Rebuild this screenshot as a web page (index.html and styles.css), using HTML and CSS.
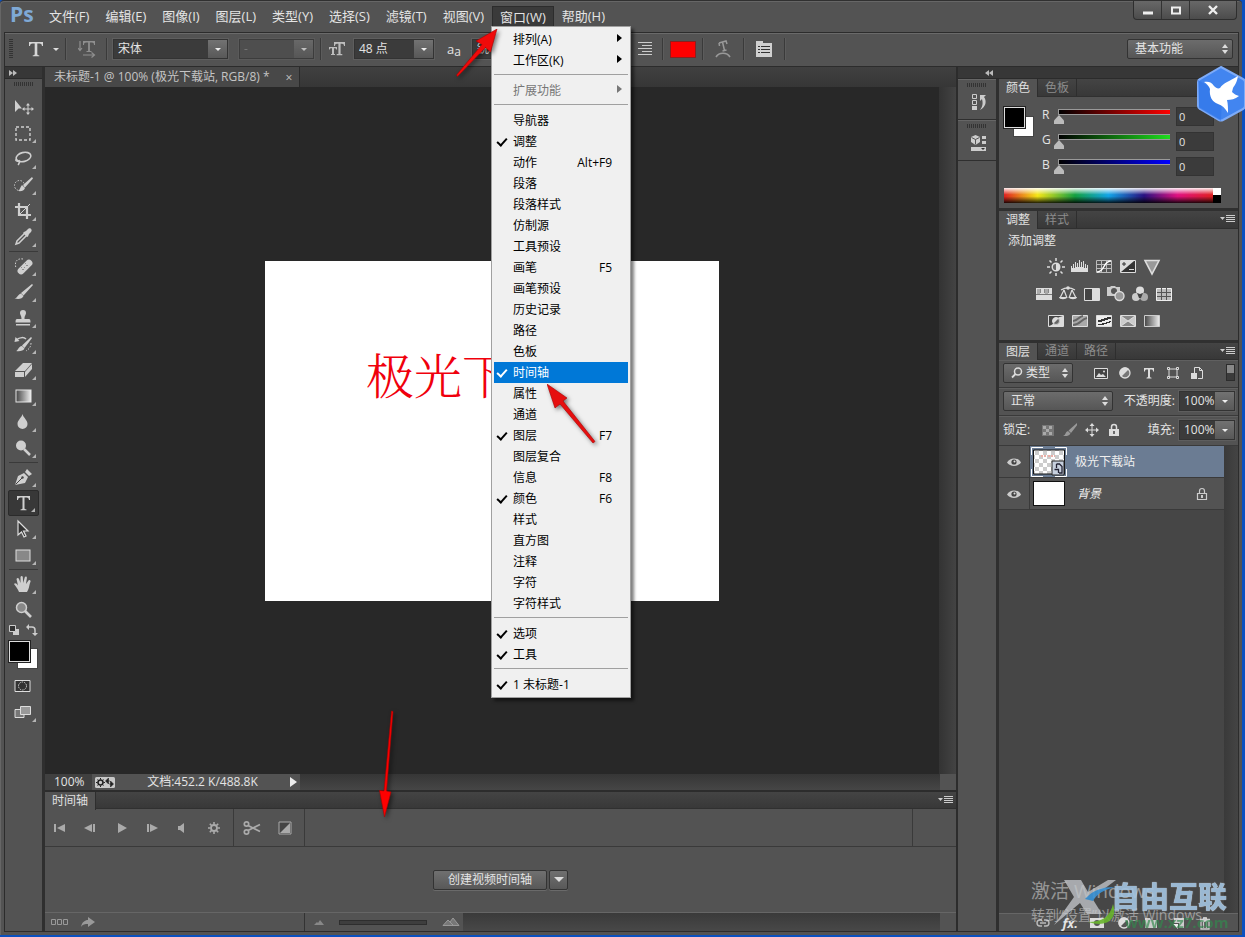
FILE: index.html
```html
<!DOCTYPE html>
<html lang="zh-CN">
<head>
<meta charset="utf-8">
<title>未标题-1</title>
<link rel="stylesheet" href="styles.css">
</head>
<body>
<div class="window">
  <header class="titlebar">
    <svg class="brand" viewBox="0 0 32 26" role="img" aria-label="Ps"><text x="3" y="21" class="brand-text">Ps</text></svg>
    <nav class="menubar">
      <button>文件(F)</button><button>编辑(E)</button><button>图像(I)</button><button>图层(L)</button><button>类型(Y)</button><button>选择(S)</button><button>滤镜(T)</button><button>视图(V)</button>
      <div class="menu-holder">
        <button class="open">窗口(W)</button>
        <ul class="menu">
          <li><button>排列(A)<i class="sub"></i></button></li>
          <li><button>工作区(K)<i class="sub"></i></button></li>
          <li class="line"></li>
          <li><button class="off">扩展功能<i class="sub"></i></button></li>
          <li class="line"></li>
          <li><button>导航器</button></li>
          <li><button class="on">调整</button></li>
          <li><button>动作<kbd>Alt+F9</kbd></button></li>
          <li><button>段落</button></li>
          <li><button>段落样式</button></li>
          <li><button>仿制源</button></li>
          <li><button>工具预设</button></li>
          <li><button>画笔<kbd>F5</kbd></button></li>
          <li><button>画笔预设</button></li>
          <li><button>历史记录</button></li>
          <li><button>路径</button></li>
          <li><button>色板</button></li>
          <li><button class="on hot">时间轴</button></li>
          <li><button>属性</button></li>
          <li><button>通道</button></li>
          <li><button class="on">图层<kbd>F7</kbd></button></li>
          <li><button>图层复合</button></li>
          <li><button>信息<kbd>F8</kbd></button></li>
          <li><button class="on">颜色<kbd>F6</kbd></button></li>
          <li><button>样式</button></li>
          <li><button>直方图</button></li>
          <li><button>注释</button></li>
          <li><button>字符</button></li>
          <li><button>字符样式</button></li>
          <li class="line"></li>
          <li><button class="on">选项</button></li>
          <li><button class="on">工具</button></li>
          <li class="line"></li>
          <li><button class="on">1 未标题-1</button></li>
        </ul>
      </div>
      <button>帮助(H)</button>
    </nav>
    <div class="winbtns">
      <button aria-label="最小化"><svg width="12" height="12" viewBox="0 0 12 12"><path d="M1 7.500h10v3H1z" fill="#eee"/></svg></button>
      <button aria-label="最大化"><svg width="12" height="12" viewBox="0 0 12 12"><path d="M2 3.500h8v6H2z" fill="none" stroke="#eee" stroke-width="2"/></svg></button>
      <button class="wide" aria-label="关闭"><svg width="12" height="12" viewBox="0 0 12 12"><path d="M2 2l8 8M10 2l-8 8" stroke="#eee" stroke-width="2.400"/></svg></button>
    </div>
  </header>

  <div class="workspace">
    <div class="options">
      <span class="grip-v"></span>
      <button class="ib tbtn" aria-label="文字工具"><svg width="16" height="18" viewBox="0 0 16 18"><path d="M1 2h14v4h-1c-.3-2-1-2.600-2.600-2.600H9.300V14c0 1 .5 1.200 2 1.400v.8H4.700v-.8c1.500-.2 2-.4 2-1.400V3.400H4.600C3 3.400 2.300 4 2 6H1z" fill="#d6d6d6"/></svg></button>
      <i class="caret"></i><span class="vs"></span>
      <button class="ib orient" aria-label="切换文本取向"><svg width="18" height="18" viewBox="0 0 18 18"><path d="M5 1h12v4h-1c0-1.600-.7-2.400-2.200-2.400h-1.900V11h1.600v1H8.500v-1h1.600V2.600H8.200C6.700 2.600 6 3.400 6 5H5z" fill="#8f8f8f"/><path d="M2 1v9M0 8l2 2.500L4 8M5 15h11M13.500 12.500l3 2.500-3 2.500" stroke="#8f8f8f" stroke-width="1.200" fill="none"/></svg></button>
      <span class="vs"></span>
      <span class="combo font"><select aria-label="字体"><option>宋体</option></select></span>
      <span class="combo fstyle dis"><select aria-label="字体样式"><option>-</option></select></span>
      <span class="vs"></span>
      <svg class="tt" width="18" height="16" viewBox="0 0 18 16"><path d="M6 1h11v4h-1c0-1.500-.6-2.300-2-2.300h-1.400V13h1.700v1.200H8.700V13h1.700V2.700H9C7.600 2.700 7 3.500 7 5H6zM1 6h8v2.600h-.8C8 7.500 7.600 7.200 7 7.200h-1V13h1v1H3v-1h1V7.200H3C2.300 7.200 2 7.500 1.800 8.600H1z" fill="#bdbdbd"/></svg>
      <span class="combo size"><select aria-label="字号"><option>48 点</option></select></span>
      <span class="aa">a<small>a</small></span>
      <span class="combo sharp"><select aria-label="消除锯齿"><option>锐利</option></select></span>
      <button class="ib al" aria-label="左对齐"><svg width="14" height="16" viewBox="0 0 14 16"><path d="M0 2h14M0 5h10M0 8h14M0 11h10M0 14h14" stroke="#ccc"/></svg></button>
      <button class="ib al" aria-label="右对齐"><svg width="14" height="16" viewBox="0 0 14 16"><path d="M0 1.500h14M4 4.500h10M0 7.500h14M4 10.500h10M0 13.500h14" stroke="#ccc"/></svg></button>
      <span class="vs"></span><button class="swatch" aria-label="文本颜色"></button><span class="vs"></span>
      <button class="ib warp" aria-label="变形文字"><svg width="18" height="18" viewBox="0 0 18 18"><path d="M5 3l7-2 1 3M5 3l.5 3M8.500 2l2 8.500M8.500 11l4-1" fill="none" stroke="#999" stroke-width="1.500"/><path d="M2 17c3-5 11-5 14 0" fill="none" stroke="#999" stroke-width="1.600"/></svg></button>
      <span class="vs"></span>
      <button class="ib pan" aria-label="字符面板"><svg width="18" height="18" viewBox="0 0 18 18"><path d="M1 1h7v2h9v14H1z" fill="#d0d0d0"/><path d="M3 6.500h2m1 0h9M3 9.500h2m1 0h9M3 12.500h2m1 0h9" stroke="#333"/></svg></button>
      <span class="vs"></span>
      <span class="updown basic"><select aria-label="工作区"><option>基本功能</option></select></span>
    </div>

    <div class="main">
      <aside class="tools">
        <div class="strip"><svg width="8" height="6" viewBox="0 0 8 6"><path d="M0 0l4 3-4 3zM4 0l4 3-4 3z" fill="#bbb"/></svg></div>
        <div class="grip-h"></div>
        <div class="toolset">
          <button class="tool" aria-label="移动"><svg viewBox="0 0 24 24"><path d="M4 5v12l3.500-3.500H11z"/><path d="M17 9v10M12 14h10" stroke="#cfcfcf" fill="none"/><path d="M17 8l-2 2.500h4zM17 20l-2-2.500h4zM11 14l2.500-2v4zM23 14l-2.500-2v4z"/></svg></button>
          <button class="tool more" aria-label="矩形选框"><svg viewBox="0 0 24 24"><path class="l" d="M5 6h14v13H5z" stroke-dasharray="3 2" stroke-width="1.400"/></svg></button>
          <button class="tool more" aria-label="套索"><svg viewBox="0 0 24 24"><ellipse class="l" cx="12.500" cy="10" rx="7.500" ry="4.500" transform="rotate(-14 12.500 10)" stroke-width="1.600"/><path class="l" d="M6 12c-3 1 0 3 2 2M8 13c1 2 0 4-1 5" stroke-width="1.300"/></svg></button>
          <button class="tool more" aria-label="快速选择"><svg viewBox="0 0 24 24"><circle class="l" cx="8.500" cy="12.500" r="5" stroke-dasharray="1.500 1.500"/><path d="M21 4l-9 8 2 2.500L22 5.500zM11 12l3 3c-1 3-4 3.500-7 3 2-1 2-4 4-6z"/></svg></button>
          <button class="tool more" aria-label="裁剪"><svg viewBox="0 0 24 24"><path class="l" d="M8 4v12h12M4 8h12v12" stroke-width="2.200"/><path class="l" d="M8 16L19 5"/></svg></button>
          <button class="tool more" aria-label="吸管"><svg viewBox="0 0 24 24"><path d="M13 7l2-1 2-2c2-2 5 1 3 3l-2 2-1 2.500-1 .5-4-4z"/><path class="l" d="M13.500 8.500L6 16l-1 3 3-1 7.500-7.500" stroke-width="1.500"/></svg></button>
          <hr>
          <button class="tool more" aria-label="污点修复"><svg viewBox="0 0 24 24"><path class="l" d="M12 5C6 4 3 8 5 14" stroke-dasharray="1.500 1.500"/><rect x="5" y="9.500" width="18" height="7" rx="3.500" transform="rotate(-45 14 13)"/><path d="M11 16l6-6M10 13l4 4M14 9l4 4" stroke="#777" stroke-dasharray="1 2"/></svg></button>
          <button class="tool more" aria-label="画笔"><svg viewBox="0 0 24 24"><path d="M21 4L10 13l2.500 2.500L22 5zM10 13.500l2.500 2.500c-1 3-5 3.500-9 2.500 3-.5 3-4 6.500-5z"/></svg></button>
          <button class="tool more" aria-label="图章"><svg viewBox="0 0 24 24"><path d="M12 4a3 3 0 0 1 3 3c0 2-1.500 2.500-1.500 6H18c1 0 1.500.5 1.500 3.500h-15C4.500 13.500 5 13 6 13h4.500C10.500 9.500 9 9 9 7a3 3 0 0 1 3-3zM5 18h14v1.500H5z"/></svg></button>
          <button class="tool more" aria-label="历史记录画笔"><svg viewBox="0 0 24 24"><path d="M20 5l-9 8.500 2.500 2.500L21 6zM11 14l2.500 2.500c-1 2.500-5 3-8.500 2.500 2.500-.5 2-4.500 6-5z"/><path class="l" d="M5 8c4-3 8-3 10-1" stroke-width="1.500"/><path class="l" d="M20 11c0 4-2 6-5 8" stroke-dasharray="1.500 1.500"/><path d="M3.500 10l1-5 4 4z"/></svg></button>
          <button class="tool more" aria-label="橡皮擦"><svg viewBox="0 0 24 24"><path d="M4 13l8-8h9l-7 8zM4 14h9v5H4zM14 14l7-8v5l-7 8z"/></svg></button>
          <button class="tool more" aria-label="渐变"><svg viewBox="0 0 24 24"><defs><linearGradient id="g1"><stop stop-color="#444"/><stop offset="1" stop-color="#eee"/></linearGradient></defs><rect x="5" y="6" width="15" height="12" fill="url(#g1)" stroke="#e6e6e6"/></svg></button>
          <button class="tool more" aria-label="模糊"><svg viewBox="0 0 24 24"><path d="M11.500 4c1 4 5 6 5 10a5 5 0 0 1-10 0c0-4 4-6 5-10z"/></svg></button>
          <button class="tool more" aria-label="减淡"><svg viewBox="0 0 24 24"><circle cx="10" cy="9.500" r="5"/><path d="M13 13l6 6" stroke="#cfcfcf" stroke-width="2.500"/></svg></button>
          <hr>
          <button class="tool more" aria-label="钢笔"><svg viewBox="0 0 24 24"><path d="M4 20l3-9 6-3 4 4-3 6zM14 7l2-3 5 5-3 2z"/><path d="M4.500 19.500L11 13" stroke="#444"/><circle cx="11.500" cy="12.500" r="1.200" fill="#444"/></svg></button>
          <button class="tool more active" aria-label="横排文字"><svg viewBox="0 0 24 24"><path d="M6 5h13v4h-1c-.4-2-1-2.600-2.600-2.600h-1.900V17c0 1 .5 1.300 2 1.400v.8h-6v-.8c1.500-.1 2-.4 2-1.400V6.400H9.600C8 6.400 7.400 7 7 9H6z"/></svg></button>
          <button class="tool more" aria-label="路径选择"><svg viewBox="0 0 24 24"><path d="M7 4v14l3.500-3 2.500 5 2-1-2.500-5H17z" fill="#333" stroke="#ddd" stroke-width="1.200"/></svg></button>
          <button class="tool more" aria-label="矩形"><svg viewBox="0 0 24 24"><rect x="5" y="7" width="14" height="11" fill="#888" stroke="#ddd"/></svg></button>
          <hr>
          <button class="tool more" aria-label="抓手"><svg viewBox="0 0 24 24"><path d="M8 20c-1-3-3-5-5-8 1-1.500 2.500-.5 4 1.500L5.500 7c.5-1.500 2-1.500 2.500 0L9.500 11V5c.5-1.500 2-1.500 2.300 0l.4 6 1.500-5.500c.6-1.500 2.200-1 2.200.4L15 12l2.500-3.500c1-1 2.500 0 2 1.200C18 13 18.500 16 16 20z"/></svg></button>
          <button class="tool" aria-label="缩放"><svg viewBox="0 0 24 24"><circle cx="10.500" cy="9.500" r="5" fill="#888" stroke="#cfcfcf" stroke-width="1.500"/><path d="M14 13l6 6" stroke="#cfcfcf" stroke-width="2.600"/></svg></button>
          <div class="mini"><svg width="12" height="12" viewBox="0 0 12 12"><path d="M5 5h6v6H5z" fill="#ccc"/><path d="M1.500 1.500h6v6h-6z" fill="#333" stroke="#ccc"/></svg><svg width="12" height="12" viewBox="0 0 12 12"><path d="M2 3h4q3 0 3 3v4" fill="none" stroke="#ccc" stroke-width="1.500"/><path d="M0 3l3-3v6zM9 12L6 9h6z" fill="#ccc"/></svg></div>
          <div class="fgbg"></div>
          <button class="tool" aria-label="快速蒙版"><svg viewBox="0 0 24 24"><path d="M4 6.500h15v11H4z" fill="#333" stroke="#ddd"/><circle class="l" cx="11.500" cy="12" r="4" stroke-dasharray="1.500 1"/></svg></button>
          <button class="tool more" aria-label="屏幕模式"><svg viewBox="0 0 24 24"><path d="M4 9.500h9v8H4z" fill="#777" stroke="#ddd"/><path d="M9.500 6.500h10v8h-10z" fill="#999" stroke="#ddd"/></svg></button>
        </div>
      </aside>

      <section class="center">
        <div class="doctabs"><div class="doctab">未标题-1 @ 100% (极光下载站, RGB/8) * <button aria-label="关闭文档">×</button></div></div>
        <div class="canvas-row">
          <div class="canvas"><div class="paper">极光下载站</div></div>
          <div class="vscroll"></div>
        </div>
        <div class="status">
          <span class="zoom">100%</span>
          <div class="info">
            <svg width="20" height="11" viewBox="0 0 20 11"><rect width="20" height="11" rx="1.500" fill="#c8c8c8"/><circle cx="5.500" cy="5.500" r="2.500" fill="none" stroke="#222" stroke-width="1.600"/><path d="M5.500 1v1.500M5.500 8.500V10M1 5.500h1.500M8.500 5.500H10M2.500 2.500l1 1M7.500 7.500l1 1M8.500 2.500l-1 1M3.500 7.500l-1 1" stroke="#222"/><path d="M10.500 4l3-3v6zM18.500 7l-3-3v6zM12 4h3M14 7h3" fill="#222" stroke="#222" stroke-width=".6"/></svg>
            <span>文档:452.2 K/488.8K</span>
            <i class="play"></i>
          </div>
          <span class="hscroll"></span><span class="corner"></span>
        </div>
        <section class="timeline">
          <div class="tabs"><button class="tab sel">时间轴</button><svg class="flyout" width="15" height="8" viewBox="0 0 15 8"><path d="M0 2h5L2.500 5z" fill="#ccc"/><path d="M6 .5h9M6 2.500h9M6 4.500h9M6 6.500h9" stroke="#ccc"/></svg></div>
          <div class="controls">
            <div class="transport">
              <button aria-label="第一帧"><svg viewBox="0 0 14 14"><path d="M1 3h2v8H1zM12 3v8L4 7z"/></svg></button>
              <button aria-label="上一帧"><svg viewBox="0 0 14 14"><path d="M8 3v8L0 7zM9 3h2v8H9z"/></svg></button>
              <button aria-label="播放"><svg viewBox="0 0 14 14"><path d="M3 2l9 5-9 5z"/></svg></button>
              <button aria-label="下一帧"><svg viewBox="0 0 14 14"><path d="M2 3h2v8H2zM5 3l8 4-8 4z"/></svg></button>
              <button aria-label="静音"><svg viewBox="0 0 14 14"><path d="M2 5h2l4-3v10L4 9H2z"/></svg></button>
              <button aria-label="设置"><svg viewBox="0 0 14 14"><circle cx="7" cy="7" r="3" fill="none" stroke="#aaa" stroke-width="1.800"/><path d="M7 1v2.500M7 10.500V13M1 7h2.500M10.500 7H13M2.800 2.800l1.700 1.700M9.500 9.500l1.700 1.700M11.200 2.800L9.500 4.500M4.500 9.500l-1.700 1.700" stroke="#aaa" stroke-width="1.600"/></svg></button>
            </div>
            <div class="edit">
              <button aria-label="拆分"><svg width="18" height="16" viewBox="0 0 18 16"><g fill="none" stroke="#aaa" stroke-width="1.700"><circle cx="3.500" cy="4" r="2.200"/><circle cx="3.500" cy="12" r="2.200"/><path d="M5 5.500l12 6M5 10.500l12-6"/></g></svg></button>
              <button aria-label="过渡"><svg width="14" height="14" viewBox="0 0 14 14"><path d="M1 1h12v12H1z" fill="#444" stroke="#aaa"/><path d="M12 2v10H2z" fill="#aaa"/></svg></button>
            </div>
            <div class="ruler"></div><div class="ruler-end"></div>
          </div>
          <div class="stage"><button class="create">创建视频时间轴</button><button class="drop" aria-label="时间轴类型"><i class="caret"></i></button></div>
          <div class="tfoot">
            <div class="tf-left"><svg width="18" height="8" viewBox="0 0 18 8"><path d="M.5 1.500h4v5h-4zM6.500 1.500h4v5h-4zM12.500 1.500h4v5h-4z" fill="none" stroke="#999"/></svg><svg width="14" height="12" viewBox="0 0 14 12"><path d="M0 11c1-5 4-7 7-7V1l7 5-7 5V8c-3 0-5 0-7 3z" fill="#999"/></svg></div>
            <div class="tf-zoom"><svg width="10" height="5" viewBox="0 0 10 5"><path d="M0 5l3-3 1 1 2-3 4 5z" fill="#888"/></svg><input type="range" class="zoomer" aria-label="时间轴缩放"><svg width="18" height="8" viewBox="0 0 18 8"><path d="M1 7.500L6 2l2 2 3-4 6 7.500zM8 4l3 3" fill="#777" stroke="#999"/></svg></div>
            <div class="tf-bar"></div>
          </div>
        </section>
      </section>

      <aside class="dock">
        <div class="strip right"><svg width="8" height="6" viewBox="0 0 8 6"><path d="M4 0L0 3l4 3zM8 0L4 3l4 3z" fill="#bbb"/></svg></div>
        <div class="dock-body">
          <div class="rail">
            <div class="rail-group"><div class="grip-h"></div><button aria-label="历史记录"><svg width="18" height="18" viewBox="0 0 18 18"><path d="M2.500 1.500h4v4h-4zM2.500 7.500h4v4h-4z" fill="none" stroke="#ccc"/><path d="M2 13h5v4H2z" fill="#ccc"/><path d="M10 2h6l-2 2c3 4 2 10-4 13 3-4 3-7 2-11l-2 2z" fill="#ccc"/></svg></button></div>
            <div class="rail-group"><div class="grip-h"></div><button aria-label="属性"><svg width="18" height="18" viewBox="0 0 18 18"><path d="M5.500 1L10 3v5l-4.500 3L1 8V3z" fill="#ccc"/><path d="M1.500 3.500L5.500 5.500v5M5.500 5.500l4-2" fill="none" stroke="#555"/><path d="M12 2h4v3h-4zM12 7h4v3h-4zM1 13h15v4H1z" fill="#ccc"/><path d="M11 14h4l-2 2z" fill="#333"/></svg></button></div>
          </div>
          <div class="panels">
            <section class="panel">
              <div class="tabs"><button class="tab sel">颜色</button><button class="tab">色板</button></div>
              <div class="color-body">
                <div class="color-main">
                  <div class="fgbg small"></div>
                  <div class="sliders">
                    <label class="sl r"><span>R</span><input type="range" min="0" max="255" value="0"><input type="text" value="0" aria-label="R 值"></label>
                    <label class="sl g"><span>G</span><input type="range" min="0" max="255" value="0"><input type="text" value="0" aria-label="G 值"></label>
                    <label class="sl b"><span>B</span><input type="range" min="0" max="255" value="0"><input type="text" value="0" aria-label="B 值"></label>
                  </div>
                </div>
                <div class="spectrum"><div class="rainbow"></div><div class="bw"></div></div>
              </div>
            </section>
            <section class="panel">
              <div class="tabs"><button class="tab sel">调整</button><button class="tab">样式</button><svg class="flyout" width="15" height="8" viewBox="0 0 15 8"><path d="M0 2h5L2.500 5z" fill="#ccc"/><path d="M6 .5h9M6 2.500h9M6 4.500h9M6 6.500h9" stroke="#ccc"/></svg></div>
              <div class="adj-body">
                <p>添加调整</p>
                <div class="adj-row">
                  <button aria-label="亮度/对比度"><svg viewBox="0 0 18 18"><circle cx="9" cy="9" r="3.800" fill="#666" stroke="#ddd" stroke-width="1.400"/><path d="M9 5a4 4 0 0 1 0 8z" fill="#ddd"/><path d="M9 0v3M9 15v3M0 9h3M15 9h3M2.500 2.500l2 2M13.500 13.500l2 2M15.500 2.500l-2 2M4.500 13.500l-2 2" stroke="#ddd" stroke-width="1.500"/></svg></button>
                  <button aria-label="色阶"><svg viewBox="0 0 18 18"><path d="M0 14V8h1v2h1V6h1v4h1V4h1v5h1V5h1v4h1V2h1v7h1V4h1v5h1V3h1v7h1V6h1v4h1V7h1v7z" fill="#ddd"/></svg></button>
                  <button aria-label="曲线"><svg viewBox="0 0 18 18"><path d="M1.500 2.500h15v12h-15zM6.500 3v11M11.500 3v11M2 6.500h14M2 10.500h14" fill="none" stroke="#bbb"/><path d="M2 14c8 0 6-11 14-11" fill="none" stroke="#fff" stroke-width="1.500"/></svg></button>
                  <button aria-label="曝光度"><svg viewBox="0 0 18 18"><path d="M1.500 2.500h15v12h-15z" fill="#333" stroke="#ddd"/><path d="M2 3h13L2 14z" fill="#ddd"/><path d="M3 6h4M5 4v4" stroke="#333"/><path d="M10 11.500h5" stroke="#ddd"/></svg></button>
                  <button aria-label="自然饱和度"><svg viewBox="0 0 18 18"><path d="M2 2.500h14L9 16z" fill="#999" stroke="#ddd" stroke-width="1.600"/></svg></button>
                </div>
                <div class="adj-row">
                  <button aria-label="色相/饱和度"><svg viewBox="0 0 18 18"><path d="M1 3h16v12H1z" fill="#ddd"/><path d="M2 4h3v5H2zM10 4h3v5h-3z" fill="#aaa"/><path d="M5.500 4v4M9.500 4v4M13.500 4v4" stroke="#888"/><path d="M1 9.500h16" stroke="#777"/></svg></button>
                  <button aria-label="色彩平衡"><svg viewBox="0 0 18 18"><path d="M2 5c5-3 9-3 14 0M5 5l-4 8M5 5l3 8M13 5l-3 8M13 5l4 8" fill="none" stroke="#ddd" stroke-width="1.200"/><path d="M0 12h8c0 3-8 3-8 0zM10 12h8c0 3-8 3-8 0z" fill="#ddd"/><circle cx="9" cy="3" r="1.800" fill="#ddd"/></svg></button>
                  <button aria-label="黑白"><svg viewBox="0 0 18 18"><path d="M1.500 3.500h15v12h-15z" fill="#444" stroke="#ddd"/><path d="M9 4h7v11H9z" fill="#ddd"/></svg></button>
                  <button aria-label="照片滤镜"><svg viewBox="0 0 18 18"><path d="M0 2h3l1-1h4l1 1h4v9H0z" fill="#ccc"/><circle cx="7" cy="6" r="3" fill="#555"/><circle cx="12.500" cy="11" r="4.500" fill="#999" stroke="#ddd" stroke-width="1.400"/></svg></button>
                  <button aria-label="通道混合器"><svg viewBox="0 0 18 18"><circle cx="9" cy="5.500" r="4" fill="#ddd"/><circle cx="5" cy="12" r="4" fill="#ccc"/><circle cx="13" cy="12" r="4" fill="#aaa"/><path d="M6 8l3 1 3-1-2 5H8z" fill="#444"/></svg></button>
                  <button aria-label="颜色查找"><svg viewBox="0 0 18 18"><path d="M1.500 3.500h15v12h-15z" fill="#bbb" stroke="#eee"/><path d="M6.500 3v12M11.500 3v12M2 7.500h14M2 11.500h14" stroke="#555"/></svg></button>
                </div>
                <div class="adj-row">
                  <button aria-label="反相"><svg viewBox="0 0 18 18"><path d="M1.500 3.500h15v11h-15z" fill="#444" stroke="#ddd"/><path d="M16 4v10H2c3-1 4-2 5-4 1-3 4-5 9-6z" fill="#ddd"/><circle cx="9" cy="9" r="3.500" fill="#666" stroke="#ccc"/><path d="M6.500 11.500a3.500 3.500 0 0 1 5-5z" fill="#ddd"/></svg></button>
                  <button aria-label="色调分离"><svg viewBox="0 0 18 18"><path d="M1.500 3.500h15v11h-15z" fill="#aaa" stroke="#ddd"/><path d="M2 9c5 0 6-5 10-5M2 13c7 0 8-6 14-7" fill="none" stroke="#666" stroke-width="2"/></svg></button>
                  <button aria-label="阈值"><svg viewBox="0 0 18 18"><path d="M1.500 3.500h15v11h-15z" fill="#eee" stroke="#ddd"/><path d="M3 8h3V7h3V6h3V5h4v2h-3v1h-3v1H7v1H3zM3 13v-1h4v-1h4v-1h3V9h2v1h-1v1h-3v1H9v1z" fill="#333"/></svg></button>
                  <button aria-label="可选颜色"><svg viewBox="0 0 18 18"><path d="M1.500 3.500h15v11h-15z" fill="#888" stroke="#ddd"/><path d="M2 4l7 5-7 5zM16 4L9 9l7 5z" fill="#ccc"/><path d="M2 4l14 10M16 4L2 14" stroke="#eee" stroke-width=".7"/></svg></button>
                  <button aria-label="渐变映射"><svg viewBox="0 0 18 18"><path d="M1.500 3.500h15v11h-15z" fill="url(#g1)" stroke="#ccc"/></svg></button>
                </div>
              </div>
            </section>
            <section class="panel layers">
              <div class="tabs"><button class="tab sel">图层</button><button class="tab">通道</button><button class="tab">路径</button><svg class="flyout" width="15" height="8" viewBox="0 0 15 8"><path d="M0 2h5L2.500 5z" fill="#ccc"/><path d="M6 .5h9M6 2.500h9M6 4.500h9M6 6.500h9" stroke="#ccc"/></svg></div>
              <div class="lrow filter">
                <span class="updown kind"><svg class="mag" width="12" height="12" viewBox="0 0 12 12"><circle cx="7" cy="4.500" r="3.500" fill="none" stroke="#ddd" stroke-width="1.500"/><path d="M4.500 7L1 10.500" stroke="#ddd" stroke-width="1.800"/></svg><select aria-label="过滤类型"><option>类型</option></select></span>
                <div class="ficons">
                  <button aria-label="像素图层"><svg viewBox="0 0 14 14"><path d="M.5 2.500h13v10H.5z" fill="#444" stroke="#ddd"/><path d="M2 11l3-4 2 2 2-1 3 3z" fill="#ddd"/><circle cx="10" cy="5.500" r="1" fill="#ddd"/></svg></button>
                  <button aria-label="调整图层"><svg viewBox="0 0 14 14"><circle cx="7" cy="7" r="5" fill="#777" stroke="#ddd" stroke-width="1.300"/><path d="M3 11A5.500 5.500 0 0 1 11 3z" fill="#ddd"/></svg></button>
                  <button aria-label="文字图层"><svg viewBox="0 0 14 14"><path d="M2 2h10v3.500h-1c0-1.500-.5-2-1.500-2H8v7c0 1 .5 1 1.500 1.200v.8h-5v-.8C5.500 11.500 6 11.500 6 10.500v-7H4.500c-1 0-1.500.5-1.500 2H2z" fill="#ddd"/></svg></button>
                  <button aria-label="形状图层"><svg viewBox="0 0 14 14"><path d="M3 3h8v8H3zM1.500 1.500h2v2h-2zM10.500 1.500h2v2h-2zM1.500 10.500h2v2h-2zM10.500 10.500h2v2h-2z" fill="none" stroke="#ddd"/></svg></button>
                  <button aria-label="智能对象"><svg viewBox="0 0 14 14"><path d="M4.500 7V1.500h5l3 3v8H8M9.500 1.500v3h3" fill="none" stroke="#ddd"/><path d="M1 7h6v6H1z" fill="#ddd"/></svg></button>
                </div>
                <button class="toggle" aria-label="打开过滤"></button>
              </div>
              <div class="lrow">
                <span class="updown blend"><select aria-label="混合模式"><option>正常</option></select></span>
                <label class="num">不透明度:<span class="combo pct"><input type="text" value="100%"></span></label>
              </div>
              <div class="lrow lockrow">
                <span class="locklabel">锁定:</span>
                <div class="locks">
                  <button aria-label="锁定透明像素"><svg viewBox="0 0 14 14"><path d="M1 2h12v11H1z" fill="#777"/><path d="M2 3h3v3H2zM8 3h3v3H8zM5 6h3v3H5zM2 9h3v3H2zM8 9h3v3H8z" fill="#aaa"/></svg></button>
                  <button aria-label="锁定图像像素"><svg viewBox="0 0 14 14"><path d="M14 0L5.500 7.500 8 10l7-9zM5 8l2.500 2.500C6 13.500 3 13 0 13c3-1 2-4 5-5z" fill="#999"/></svg></button>
                  <button aria-label="锁定位置"><svg viewBox="0 0 14 14"><path d="M7 2v10M2 7h10" stroke="#ddd"/><path d="M7 0l2.500 3h-5zM7 14l2.500-3h-5zM0 7l3-2.500v5zM14 7l-3-2.500v5z" fill="#ddd"/></svg></button>
                  <button aria-label="锁定全部"><svg viewBox="0 0 14 14"><path d="M4.500 6V4a2.500 2.500 0 0 1 5 0v2" fill="none" stroke="#ddd" stroke-width="1.500"/><path d="M2 6h10v7H2z" fill="#ddd"/><path d="M7 8v3" stroke="#444" stroke-width="1.500"/></svg></button>
                </div>
                <label class="num">填充:<span class="combo pct"><input type="text" value="100%"></span></label>
              </div>
              <div class="lbody">
                <div class="llist">
                  <div class="layer sel">
                    <button class="eye" aria-label="可见"><svg width="14" height="10" viewBox="0 0 14 10"><path d="M0 5.500C3 0 11 0 14 5.500 11 10 3 10 0 5.500z" fill="#ccc"/><circle cx="7" cy="5" r="2.600" fill="#444"/><circle cx="7.500" cy="4.500" r="1" fill="#ddd"/></svg></button>
                    <svg class="thumb" width="36" height="30" viewBox="0 0 36 30"><defs><pattern id="ck" width="8" height="8" patternUnits="userSpaceOnUse"><path d="M0 0h8v8H0z" fill="#fff"/><path d="M0 0h4v4H0zM4 4h4v4H4z" fill="#ccc"/></pattern></defs><path d="M.5 8V.5H12M24 .5h11.500V8M.5 22v7.500H12M24 29.500h11.500V22" fill="none" stroke="#fff"/><path d="M2.500 3h31v24h-31z" fill="url(#ck)" stroke="#111"/><path d="M10 9h5M17 9h7" stroke="#eab0a8" stroke-width="2" stroke-dasharray="2 1"/><path d="M21 14h12v14H21z" fill="#c7d0de" stroke="#222"/><path d="M25.500 17h3l2.500 2.500V26h-3M25.500 17v4M23.500 22.500h4v3.500" fill="none" stroke="#223" stroke-width="1.300"/></svg>
                    <span>极光下载站</span>
                  </div>
                  <div class="layer">
                    <button class="eye" aria-label="可见"><svg width="14" height="10" viewBox="0 0 14 10"><path d="M0 5.500C3 0 11 0 14 5.500 11 10 3 10 0 5.500z" fill="#ccc"/><circle cx="7" cy="5" r="2.600" fill="#444"/><circle cx="7.500" cy="4.500" r="1" fill="#ddd"/></svg></button>
                    <i class="thumb white"></i>
                    <em>背景</em>
                    <svg class="lock" width="12" height="14" viewBox="0 0 12 14"><path d="M3.500 6V4a2.500 2.500 0 0 1 5 0v2M1.500 6.500h9v6h-9z" fill="none" stroke="#ccc" stroke-width="1.200"/><path d="M6 8v3" stroke="#ccc" stroke-width="2"/></svg>
                  </div>
                </div>
                <div class="lscroll"></div>
              </div>
              <div class="lfoot">
                <button aria-label="链接图层"><svg viewBox="0 0 14 14"><path d="M6 4H4a3 3 0 0 0 0 6h2M8 4h2a3 3 0 0 1 0 6H8M4 7h6" fill="none" stroke="#bbb" stroke-width="1.400"/></svg></button>
                <button class="fx">fx.</button>
                <button aria-label="添加蒙版"><svg viewBox="0 0 14 14"><path d="M0 2h14v10H0z" fill="#ddd"/><circle cx="7" cy="7" r="3" fill="#555"/></svg></button>
                <button aria-label="新建调整"><svg viewBox="0 0 14 14"><circle cx="7" cy="7" r="5" fill="#555" stroke="#ddd" stroke-width="1.300"/><path d="M3 11A5.500 5.500 0 0 1 11 3z" fill="#ddd"/></svg></button>
                <button aria-label="新建组"><svg viewBox="0 0 14 14"><path d="M1 2h5l1 2h6v8H1z" fill="#ccc"/></svg></button>
                <button aria-label="新建图层"><svg viewBox="0 0 14 14"><path d="M3 2h10v10H8V7H3z" fill="#ccc"/><path d="M2 8h5v5z" fill="#eee"/></svg></button>
                <button aria-label="删除图层"><svg viewBox="0 0 14 14"><path d="M2 3.500h10M5 2h4M3 5h8v8H3zM5.500 5v7M8.500 5v7" fill="none" stroke="#ccc" stroke-width="1.300"/></svg></button>
              </div>
            </section>
          </div>
        </div>
      </aside>
    </div>
  </div>
</div>

<svg class="over arrow-top" width="60" height="60" viewBox="0 0 60 60"><path d="M48 0L41.500 23l-5-4.500L8.500 47.500l-1-1.500L33 15.500 27 12z" fill="#f00a0a" stroke="#a00" stroke-width=".6"/></svg>
<svg class="over arrow-mid" width="60" height="70" viewBox="0 0 60 70"><path d="M0 0L20 14l-4 3 32 40.500-2 1.500L13 20l-5 4z" fill="#e60f0f" stroke="#a00" stroke-width=".6"/></svg>
<svg class="over arrow-low" width="30" height="112" viewBox="0 0 30 112"><path d="M15 1.500L8.500 81l4.500 1-6.500 25L1.500 80.500l4.500.5L13.500 1z" fill="#f00" stroke="#a00" stroke-width=".6"/></svg>
<svg class="over bird" width="48" height="56" viewBox="0 0 48 56"><path d="M24 1l22 12q2 1 2 3v24q0 2-2 3L26 54q-2 1-4 0L3 43q-2-1-2-3V16q0-2 2-3z" fill="#4285f0" stroke="#7dabf8" stroke-width="2"/><path d="M1 14l24 14L24 55 2 42z" fill="#2f74e8" opacity=".6"/><path d="M7 16c4-1 8 0 10 4 2 2 4 3 6 2 3-5 10-7 18-12-1 6-3 9-5 12l-1 4c2 2 4 3 7 4-4 3-8 4-12 4 1 4 1 8 1 13-3-5-6-8-10-9-6-2-9-8-8-15-1-3-3-5-6-7z" fill="#fff"/></svg>
<div class="over activate"><p>激活 Windows</p><small>转到“设置”以激活 Windows。</small></div>
<div class="over site">
  <svg width="66" height="54" viewBox="0 0 66 54"><path d="M10 5h17l7 12L54 5h8L38 23l10 16H33l-7-11L0 50l20-28z" fill="#c4c8cc" opacity=".85"/><path d="M31 24c8-9 17-12 30-12-12 3-18 7-22 14z" fill="#3c94d8"/><path d="M34 47c14 0 22-5 25-18 5 15-6 24-25 18z" fill="#69b52c"/></svg>
  <div><strong>自由互联</strong><span>www.xz7.com</span></div>
</div>
</body>
</html>
```
FILE: styles.css
```css
* { box-sizing: border-box; }
body {
  margin: 0; height: 100vh; overflow: hidden; position: relative;
  font: 12px/16px "Open Sans", "Noto Sans CJK SC", sans-serif;
  color: #e4e4e4; background: #0a50c0;
  padding: 0 3px 2px 0;
}
button, select, input { font: inherit; color: inherit; margin: 0; padding: 0; border: 0; background: none; border-radius: 0; }
svg { display: block; flex: none; }
p, ul { margin: 0; padding: 0; list-style: none; }

.window { height: 100%; display: flex; flex-direction: column; background: #535353; border-top: 1px solid #303030; border-radius: 4px 4px 0 0; box-shadow: inset 1px 1px #666; }
.titlebar { display: flex; height: 31px; flex: none; }
.brand { width: 32px; height: 26px; margin: 0 2px 0 7px; }
.brand-text { font: bold 21px "Open Sans", sans-serif; fill: #7fa9d6; }
.menubar { display: flex; padding-top: 5px; font-size: 13px; }
.menubar > button, .menu-holder > button { height: 20px; padding: 0 8px; white-space: nowrap; }
.menu-holder { position: relative; }
.menu-holder > .open { background: #3a3a3a; border: 1px solid #2c2c2c; border-bottom: 0; padding: 0 7px; }
.menu {
  position: absolute; z-index: 10; top: 20px; left: -1px; width: 140px; padding: 2px;
  background: #f0f0f0; border: 1px solid #a0a0a0; box-shadow: 3px 3px 3px rgba(0, 0, 0, .5);
  color: #000; font-size: 12px;
}
.menu button { position: relative; display: flex; align-items: center; width: 100%; height: 21px; padding: 0 16px 0 19px; text-align: left; }
.menu kbd { font: inherit; margin-left: auto; }
.menu .line { height: 9px; padding-top: 3px; }
.menu .line::before { content: ""; display: block; height: 1px; background: #a0a0a0; }
.menu .off { color: #777; }
.menu .hot { background: #0078d7; color: #fff; }
.menu .on::before { content: ""; position: absolute; left: 5px; top: 5px; width: 4px; height: 8px; border: solid currentColor; border-width: 0 2px 2px 0; transform: rotate(42deg); }
.sub { margin-left: auto; margin-right: -10px; margin-bottom: 4px; border: solid transparent; border-width: 4px 0 4px 5px; border-left-color: currentColor; }
.winbtns { margin: 0 5px 0 auto; display: flex; height: 19px; border: 1px solid #2e2e2e; border-top: 0; border-radius: 0 0 4px 4px; background: linear-gradient(#686868, #4c4c4c); }
.winbtns button { width: 28px; display: grid; place-items: center; border-right: 1px solid #333; }
.winbtns .wide { width: 46px; border: 0; }

.workspace { flex: 1; min-height: 0; margin: 0 3px 3px 4px; border: 1px solid #2c2c2c; display: flex; flex-direction: column; }
.options { height: 33px; flex: none; display: flex; align-items: center; padding: 0 5px 2px 4px; border-top: 1px solid #6a6a6a; }
.grip-v { width: 4px; height: 20px; background: repeating-linear-gradient(#333 0 1px, transparent 1px 2px); margin-right: 15px; }
.ib { display: grid; place-items: center; }
.caret { width: 0; border: solid transparent; border-width: 3px 3px 0; border-top-color: #ddd; margin: 0 6px 0 9px; }
.vs { width: 2px; height: 22px; border-left: 1px solid #3a3a3a; border-right: 1px solid #5c5c5c; }
.orient { margin: 0 10px 0 11px; }
.combo { position: relative; display: block; height: 20px; border: 1px solid #333; background: #3b3b3b; outline: 1px solid #5e5e5e; }
.combo select, .combo input { appearance: none; width: 100%; height: 100%; padding-left: 4px; display: block; }
.combo::before { content: ""; position: absolute; right: 0; top: 0; bottom: 0; width: 19px; background: linear-gradient(#727272, #585858); pointer-events: none; }
.combo::after { content: ""; position: absolute; right: 6px; top: 8px; border: solid transparent; border-width: 3px 3px 0; border-top-color: #eee; pointer-events: none; }
.font { width: 115px; margin: 0 11px 0 5px; }
.fstyle { width: 75px; margin-right: 6px; }
.dis { color: #888; background: #4c4c4c; opacity: .7; }
.tt { margin: 0 8px 0 6px; }
.size { width: 80px; }
.aa { width: 38px; padding-left: 13px; font-size: 13px; white-space: nowrap; }
.aa small { font-size: 12px; position: relative; top: 2px; }
.sharp { width: 76px; margin-right: 46px; }
.al { margin-right: 10px; margin-left: 10px; }
.swatch { width: 26px; height: 17px; margin: 0 6px; background: #f00; border: 1px solid #8a2020; }
.warp { margin: 0 11px 0 10px; }
.pan { margin: 0 11px 0 10px; }
.updown { position: relative; display: flex; align-items: center; height: 20px; border: 1px solid #333; border-radius: 2px; background: linear-gradient(#6c6c6c, #565656); }
.updown select { appearance: none; width: 100%; padding-left: 7px; }
.updown::before, .updown::after { content: ""; position: absolute; right: 4px; border: solid transparent; pointer-events: none; }
.updown::before { top: 4px; border-width: 0 3px 4px; border-bottom-color: #ddd; }
.updown::after { bottom: 4px; border-width: 4px 3px 0; border-top-color: #ddd; }
.basic { width: 106px; margin-left: auto; }

.main { flex: 1; min-height: 0; display: flex; border-top: 1px solid #2c2c2c; }
.strip { height: 12px; background: #373737; border-bottom: 1px solid #2b2b2b; padding: 3px 0 0 4px; flex: none; }
.tools { width: 40px; flex: none; border-right: 3px solid #2f2f2f; }
.grip-h { width: 20px; height: 4px; margin: 3px auto 0; background: repeating-linear-gradient(90deg, #333 0 1px, transparent 1px 2px); }
.toolset { padding-top: 8px; }
.toolset hr { border: solid #3a3a3a; border-width: 1px 0 0; margin: 1px 4px; }
.tool { position: relative; display: grid; place-items: center; width: 31px; height: 26px; margin-left: 3px; padding-right: 2px; }
.tool svg { width: 24px; height: 24px; fill: #cfcfcf; }
.tool .l { fill: none; stroke: #cfcfcf; }
.more::after { content: ""; position: absolute; right: 3px; bottom: 3px; border: solid transparent; border-width: 0 0 4px 4px; border-bottom-color: #b5b5b5; }
.active { background: #383838; border: 1px solid #2b2b2b; border-radius: 2px; }
.mini { display: flex; gap: 6px; padding: 1px 0 0 3px; height: 18px; }
.fgbg { position: relative; width: 29px; height: 28px; margin: 0 0 4px 4px; }
.fgbg::before, .fgbg::after { content: ""; position: absolute; width: 19px; height: 19px; }
.fgbg::before { right: 0; bottom: 0; background: #fff; border: 1px solid #444; }
.fgbg::after { left: 0; top: 0; background: #000; border: 1px solid #ddd; outline: 1px solid #222; }

.center { flex: 1; min-width: 0; display: flex; flex-direction: column; }
.doctabs { height: 20px; flex: none; background: linear-gradient(#404040, #363636); display: flex; }
.doctab { background: #484848; padding: 2px 7px 0 9px; font-size: 12px; color: #c4c4c4; border-right: 1px solid #2b2b2b; white-space: nowrap; display: flex; gap: 16px; }
.doctab button { line-height: 16px; }
.canvas-row { flex: 1; min-height: 0; display: flex; }
.canvas { flex: 1; display: grid; place-items: center; background: #282828; overflow: hidden; }
.paper { width: 454px; height: 340px; background: #fff; padding: 78px 0 0 101px; color: #f0000c; font: 300 48px/70px "Noto Serif CJK SC", "Noto Sans CJK SC", serif; white-space: nowrap; overflow: hidden; }
.vscroll { width: 17px; background: linear-gradient(90deg, #333, #434343); }
.status { height: 16px; flex: none; display: flex; background: #484848; }
.zoom { width: 47px; padding-left: 9px; background: #404040; }
.info { width: 208px; display: flex; align-items: center; padding: 0 3px; background: #535353; justify-content: space-between; white-space: nowrap; }
.play { border: solid transparent; border-width: 5px 0 5px 7px; border-left-color: #eee; }
.hscroll { flex: 1; background: linear-gradient(#363636, #464646); }
.corner { width: 16px; background: #535353; }

.tabs { display: flex; height: 18px; flex: none; background: linear-gradient(#444, #383838); border-bottom: 1px solid #303030; }
.tab { padding: 0 7px; color: #8c8c8c; border-right: 1px solid #2e2e2e; line-height: 16px; }
.tab.sel { background: #535353; color: #e0e0e0; height: 18px; }
.flyout { margin: 4px 3px 0 auto; }
.timeline { border-top: 2px solid #2c2c2c; flex: none; }
.timeline .tabs, .layers .tabs { height: 17px; }
.controls { display: flex; height: 38px; border-bottom: 1px solid #3a3a3a; }
.transport { width: 189px; display: flex; justify-content: space-between; align-items: center; padding: 0 12px 0 8px; border-right: 1px solid #3a3a3a; }
.transport svg { width: 14px; height: 14px; fill: #aaa; }
.edit { width: 71px; display: flex; align-items: center; gap: 17px; padding-left: 9px; border-right: 1px solid #3a3a3a; }
.ruler { flex: 1; border-right: 1px solid #3a3a3a; }
.ruler-end { width: 43px; }
.stage { height: 65px; display: flex; gap: 2px; justify-content: center; align-items: center; }
.create, .drop { height: 20px; border: 1px solid #333; border-radius: 2px; background: linear-gradient(#707070, #585858); box-shadow: 0 1px #6a6a6a; }
.create { width: 114px; }
.drop { width: 19px; display: grid; place-items: center; }
.drop .caret { margin: 0; border-width: 5px 5px 0; }
.tfoot { height: 19px; display: flex; border-top: 1px solid #666; }
.tf-left { width: 260px; display: flex; align-items: center; gap: 12px; padding-left: 6px; border-right: 1px solid #333; }
.tf-zoom { width: 158px; display: flex; align-items: center; gap: 15px; padding-left: 9px; }
.zoomer { appearance: none; width: 88px; height: 5px; background: #3e3e3e; border: 1px solid #2e2e2e; }
.zoomer::-webkit-slider-thumb { appearance: none; width: 0; height: 0; }
.tf-bar { flex: 1; margin-right: 16px; background: linear-gradient(#3a3a3a, #484848); }

.dock { width: 282px; flex: none; border-left: 2px solid #2c2c2c; display: flex; flex-direction: column; }
.right { padding-left: 27px; }
.dock-body { flex: 1; min-height: 0; display: flex; }
.rail { width: 41px; border-right: 3px solid #2f2f2f; }
.rail-group { height: 41px; padding-top: 1px; border-bottom: 1px solid #2f2f2f; box-shadow: inset 0 1px #666; }
.rail-group button { display: block; margin: 6px 0 0 12px; }
.panels { flex: 1; min-width: 0; display: flex; flex-direction: column; }
.panel + .panel { border-top: 3px solid #303030; }
.color-body { height: 111px; padding: 10px 17px 0 5px; }
.color-main { display: flex; height: 81px; margin-right: 7px; }
.small { margin: 0 8px 0 0; width: 30px; height: 30px; flex: none; }
.sliders { flex: 1; min-width: 0; }
.sl { display: flex; height: 25px; align-items: flex-start; }
.sl span { width: 16px; }
.sl input[type=range] { appearance: none; flex: 1; min-width: 0; height: 16px; margin-top: 2px; }
.sl input::-webkit-slider-runnable-track { height: 16px; background: linear-gradient(90deg, #000, var(--hue)) 1px 1px / 100% 4px no-repeat, linear-gradient(#999, #999) 0 0 / 100% 6px no-repeat; }
.sl input::-webkit-slider-thumb { appearance: none; width: 10px; height: 9px; margin-top: 6px; margin-left: -4px; background: #bbb; clip-path: polygon(50% 0, 100% 60%, 100% 100%, 0 100%, 0 60%); }
.sl input[type=text] { width: 38px; height: 19px; margin: 0 0 0 6px; padding-left: 2px; background: #3b3b3b; border: 1px solid #333; font-size: 11px; }
.r { --hue: #f00; } .g { --hue: #1fe01f; } .b { --hue: #00f; }
.spectrum { display: flex; height: 15px; }
.rainbow { flex: 1; background: linear-gradient(#fffe, #fff0 45%, #0000 55%, #000d), linear-gradient(90deg, #e02020, #f5e616 16%, #12a040 34%, #10a4e8 50%, #281080 67%, #e01080 83%, #e02020); }
.bw { width: 8px; background: linear-gradient(#fff 50%, #000 50%); }
.adj-body { height: 111px; padding-top: 4px; }
.adj-body p { padding-left: 9px; height: 20px; }
.adj-row { height: 27px; display: flex; justify-content: center; gap: 6px; align-items: center; padding-right: 29px; }
.adj-row svg { width: 18px; height: 18px; }

.layers { flex: 1; min-height: 0; display: flex; flex-direction: column; }
.lrow { height: 28px; flex: none; display: flex; align-items: center; padding: 0 3px 2px 4px; border-bottom: 1px solid #3a3a3a; box-shadow: inset 0 1px #606060; }
.lockrow { height: 30px; }
.kind { width: 70px; }
.kind select { padding-left: 1px; }
.mag { margin: 0 2px 0 7px; }
.ficons, .locks { display: flex; gap: 10px; }
.ficons { margin-left: 21px; }
.ficons svg, .locks svg, .lfoot svg { width: 14px; height: 14px; }
.toggle { margin-left: auto; width: 9px; height: 17px; border: 1px solid #2c2c2c; background: linear-gradient(#888 50%, #3b3b3b 50%); }
.blend { width: 110px; }
.num { margin-left: auto; display: flex; align-items: center; gap: 4px; white-space: nowrap; }
.pct { width: 56px; }
.locklabel { padding-right: 11px; }
.locks { gap: 8px; }
.lbody { flex: 1; min-height: 0; display: flex; background: #464646; }
.llist { flex: 1; }
.layer { display: flex; align-items: center; height: 32px; background: #535353; border-bottom: 1px solid #3a3a3a; color: #eee; }
.layer.sel { background: linear-gradient(90deg, #535353 31px, #6b7c93 31px); }
.eye { width: 31px; height: 31px; display: grid; place-items: center; border-right: 1px solid #3a3a3a; }
.thumb { margin: 0 8px 0 1px; }
.white { width: 32px; height: 25px; background: #fff; border: 1px solid #111; margin: 0 12px 0 3px; }
.lock { margin-left: auto; margin-right: 16px; }
.lscroll { width: 14px; background: linear-gradient(90deg, #3a3a3a, #444); }
.lfoot { height: 18px; flex: none; border-top: 1px solid #666; display: flex; gap: 13px; justify-content: center; align-items: center; padding-left: 10px; }
.fx { width: 14px; font: italic bold 13px/14px "Open Sans", sans-serif; }

.over { position: absolute; z-index: 20; pointer-events: none; }
.arrow-top, .arrow-mid, .arrow-low { filter: drop-shadow(2px 2px 2px rgba(0, 0, 0, .5)); }
.arrow-top { left: 449px; top: 29px; }
.arrow-mid { left: 547px; top: 384px; }
.arrow-low { left: 378px; top: 710px; }
.bird { right: 0; top: 66px; }
.activate { left: 1031px; top: 878px; color: rgba(230, 230, 230, .5); white-space: nowrap; }
.activate p { font-size: 19px; line-height: 26px; }
.activate small { font-size: 14px; line-height: 22px; display: block; }
.site { left: 1054px; top: 875px; display: flex; opacity: .9; }
.site div { display: flex; flex-direction: column; margin-left: -9px; white-space: nowrap; }
.site strong { font: 900 29px/40px "Noto Sans CJK SC", sans-serif; color: #a4c5e2; text-shadow: 0 0 1px #fff; }
.site span { font: bold 15px/14px "Open Sans", sans-serif; color: #338a4e; padding-left: 14px; opacity: .75; }
```
